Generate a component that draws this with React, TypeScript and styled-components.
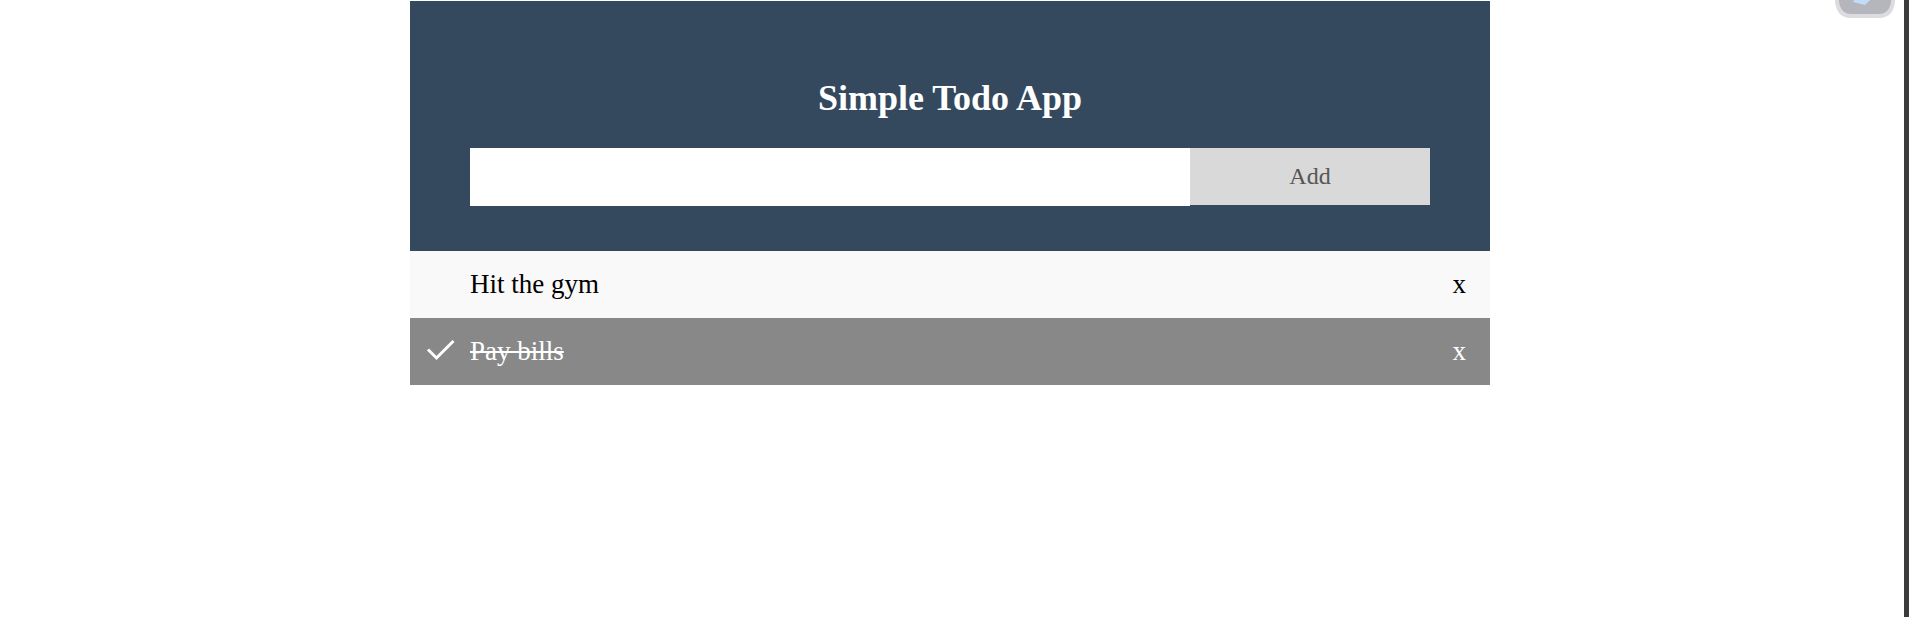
import React, { useState } from "react";
import styled, { createGlobalStyle } from "styled-components";

const GlobalStyle = createGlobalStyle`
  * { box-sizing: border-box; }
  body {
    margin: 0;
    background: #fff;
    font-family: "Liberation Serif", "Times New Roman", serif;
  }
`;

const Page = styled.div`
  display: flex;
  min-height: 100vh;
  border-right: 5px solid #3b3b3b;
  padding: 1px 4px 0 0;
`;

const Main = styled.main`
  width: 100%;
  max-width: 1080px;
  margin: 0 auto;
`;

const Header = styled.header`
  padding: 75px 60px 45px;
  background: #34495e;
  color: #fff;
  text-align: center;
`;

const Title = styled.h2`
  margin: 0 0 28px;
  font-size: 36px;
  line-height: 44px;
`;

const Form = styled.form`
  display: flex;
  align-items: flex-start;
`;

const TextInput = styled.input`
  width: 75%;
  height: 58px;
  padding: 0 15px;
  border: 0;
  border-radius: 0;
  outline: 0;
  background: #fff;
  font: 24px "Liberation Serif", "Times New Roman", serif;
`;

const AddButton = styled.button`
  width: 25%;
  height: 57px;
  padding: 0;
  border: 0;
  background: #d9d9d9;
  color: #555;
  font: 24px "Liberation Serif", "Times New Roman", serif;
  cursor: pointer;
`;

const List = styled.ul`
  margin: 0;
  padding: 0;
  list-style: none;
`;

const Row = styled.li<{ $done: boolean }>`
  display: flex;
  height: 67px;
  background: ${(p) => (p.$done ? "#888" : "#f9f9f9")};
  color: ${(p) => (p.$done ? "#fff" : "#000")};
  font-size: 27px;
  line-height: 31px;
`;

const TaskLabel = styled.label<{ $done: boolean }>`
  flex: 1;
  display: grid;
  grid-template-columns: 60px 1fr;
  align-items: center;
  text-decoration: ${(p) => (p.$done ? "line-through" : "none")};
  cursor: pointer;
`;

const Tick = styled.input`
  grid-area: 1 / 1;
  justify-self: stretch;
  align-self: stretch;
  margin: 0;
  appearance: none;
  cursor: pointer;
`;

const CheckMark = styled.svg`
  grid-area: 1 / 1;
  justify-self: center;
  width: 30px;
  height: 25px;
  pointer-events: none;
`;

const TaskText = styled.span`
  grid-area: 1 / 2;
`;

const CloseButton = styled.button`
  padding: 18px 24px;
  border: 0;
  background: transparent;
  color: inherit;
  font: inherit;
  cursor: pointer;
`;

const Floating = styled.div`
  position: absolute;
  top: 0;
  right: 14px;
  width: 60px;
  height: 18px;
`;

type Task = { text: string; done: boolean };

export default function App() {
  const [draft, setDraft] = useState("");
  const [tasks, setTasks] = useState<Task[]>([
    { text: "Hit the gym", done: false },
    { text: "Pay bills", done: true },
  ]);

  const add = (e: React.FormEvent) => {
    e.preventDefault();
    if (!draft.trim()) return;
    setTasks([...tasks, { text: draft, done: false }]);
    setDraft("");
  };

  const toggle = (index: number) =>
    setTasks(tasks.map((t, i) => (i === index ? { ...t, done: !t.done } : t)));

  return (
    <Page>
      <GlobalStyle />
      <Main>
        <Header>
          <Title id="title">Simple Todo App</Title>
          <Form onSubmit={add}>
            <TextInput
              type="text"
              aria-labelledby="title"
              value={draft}
              onChange={(e) => setDraft(e.target.value)}
            />
            <AddButton type="submit">Add</AddButton>
          </Form>
        </Header>
        <List>
          {tasks.map((task, i) => (
            <Row key={i} $done={task.done}>
              <TaskLabel $done={task.done}>
                <Tick type="checkbox" checked={task.done} onChange={() => toggle(i)} />
                {task.done && (
                  <CheckMark viewBox="0 0 30 25" aria-hidden="true">
                    <path d="M3 10.5 11.5 19 28.5 2" fill="none" stroke="#fff" strokeWidth="3" />
                  </CheckMark>
                )}
                <TaskText>{task.text}</TaskText>
              </TaskLabel>
              <CloseButton type="button" onClick={() => setTasks(tasks.filter((_, n) => n !== i))}>
                x
              </CloseButton>
            </Row>
          ))}
        </List>
      </Main>
      <Floating aria-hidden="true">
        <svg width="60" height="18" viewBox="0 0 60 18">
          <path d="M0 0H60V2Q58 18 44 18H16Q2 18 0 2Z" fill="#dcdce0" />
          <path d="M4 0H56V2Q54 14 44 14H16Q6 14 4 2Z" fill="#b5b6bb" />
          <path d="M19 0H35L30 5 18 2Z" fill="#c0dcf8" />
        </svg>
      </Floating>
    </Page>
  );
}
